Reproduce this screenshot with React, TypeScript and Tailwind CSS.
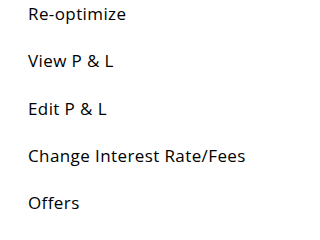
import React from 'react';

const items = ['Re-optimize', 'View P & L', 'Edit P & L', 'Change Interest Rate/Fees', 'Offers'];

export default function App() {
  return (
    <div className="w-[259px] h-[221px] bg-white overflow-hidden">
      <ul className="flex flex-col gap-[20.25px] font-['Open_Sans',sans-serif] text-[17px] tracking-[0.4px] text-black">
        {items.map((label) => (
          <li key={label} className="leading-[27px] pl-[28px] whitespace-nowrap cursor-pointer">
            {label}
          </li>
        ))}
      </ul>
    </div>
  );
}
